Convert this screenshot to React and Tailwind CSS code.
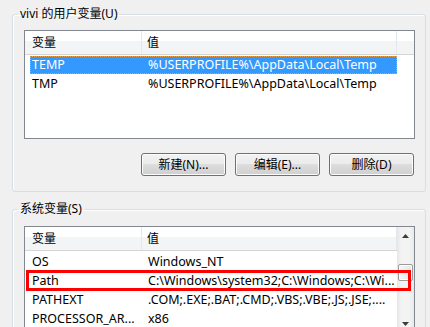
import React from "react";

function Header({ filler }) {
  return (
    <div className="flex h-[24px] shrink-0 border-b border-[#d5d5d5] bg-[linear-gradient(to_bottom,#ffffff_0%,#ffffff_42%,#f3f4f6_42%,#f3f4f6_100%)]">
      <div className="w-[117px] shrink-0 pl-[7px] flex items-center border-r border-[#e3e8ee]">变量</div>
      <div className="w-[255px] shrink-0 pl-[5px] flex items-center border-r border-[#e3e8ee]">值</div>
      {filler && <div className="flex-1" />}
    </div>
  );
}

function Row({ name, value, selected }) {
  return (
    <div className="h-[19px] flex shrink-0 text-[12.5px]">
      <div
        className={
          selected
            ? "ml-[5px] mt-[1px] w-[367px] flex items-center bg-[#3399ff] text-white outline outline-1 outline-dotted outline-[#e8a04a] -outline-offset-1"
            : "ml-[5px] w-[367px] flex items-center"
        }
      >
        <div className="w-[112px] shrink-0 pl-[2px] whitespace-nowrap overflow-hidden">{name}</div>
        <div className="w-[255px] shrink-0 pl-[6px] whitespace-nowrap overflow-hidden">{value}</div>
      </div>
    </div>
  );
}

function Button({ children }) {
  return (
    <div className="w-[85px] h-[23px] flex items-center justify-center rounded-[3px] border border-[#707070] bg-[linear-gradient(to_bottom,#f2f2f2_0%,#ebebeb_50%,#dddddd_50%,#cfcfcf_100%)] shadow-[inset_0_0_0_1px_#fcfcfc]">
      {children}
    </div>
  );
}

function Arrow({ down }) {
  return (
    <svg width="7" height="4" viewBox="0 0 7 4" className={down ? "rotate-180" : ""}>
      <polygon points="0,4 3.5,0 7,4" fill="#3c3c3c" />
    </svg>
  );
}

export default function App() {
  return (
    <div className="relative w-[430px] h-[327px] overflow-hidden bg-[#f0f0f0] pt-[6px] text-[12px] leading-[16px] text-black font-['Noto_Sans','Noto_Sans_CJK_SC',sans-serif]">
      <fieldset className="ml-[12px] w-[414px] border border-[#d5dfe5] rounded-[3px] p-0 shadow-[inset_1px_1px_0_#ffffff]">
        <legend className="ml-[5px] px-[2px] leading-[16px]">vivi 的用户变量(U)</legend>
        <div className="pl-[11px] pr-[10px] pb-[15px]">
          <div className="mt-[8px] h-[109px] border border-[#828790] bg-white flex flex-col overflow-hidden">
            <Header filler />
            <Row name="TEMP" value="%USERPROFILE%\AppData\Local\Temp" selected />
            <Row name="TMP" value="%USERPROFILE%\AppData\Local\Temp" />
          </div>
          <div className="mt-[14px] flex justify-end gap-[9px] pr-[1px]">
            <Button>新建(N)...</Button>
            <Button>编辑(E)...</Button>
            <Button>删除(D)</Button>
          </div>
        </div>
      </fieldset>

      <fieldset className="mt-[9px] ml-[12px] w-[414px] border border-[#d5dfe5] rounded-[3px] p-0 shadow-[inset_1px_1px_0_#ffffff]">
        <legend className="ml-[5px] px-[2px] leading-[16px]">系统变量(S)</legend>
        <div className="pl-[11px] pr-[10px] pb-[15px]">
          <div className="mt-[9px] h-[107px] border border-[#828790] bg-white flex overflow-hidden">
            <div className="w-[372px] flex flex-col overflow-hidden">
              <Header />
              <div className="h-[1px] shrink-0" />
              <Row name="OS" value="Windows_NT" />
              <Row name="Path" value="C:\Windows\system32;C:\Windows;C:\Wi..." />
              <Row name="PATHEXT" value=".COM;.EXE;.BAT;.CMD;.VBS;.VBE;.JS;.JSE;...." />
              <Row name="PROCESSOR_AR..." value="x86" />
            </div>
            <div className="w-[17px] flex flex-col bg-[linear-gradient(to_right,#e6e6e6,#f3f3f3_25%,#f3f3f3_75%,#e9e9e9)]">
              <div className="h-[17px] flex items-center justify-center">
                <Arrow />
              </div>
              <div className="flex-1">
                <div className="mt-[20px] mx-[1px] h-[17px] rounded-[2px] border border-[#9b9b9b] bg-[linear-gradient(to_right,#f6f6f6,#e6e6e6)] shadow-[inset_0_0_0_1px_#ffffff]" />
              </div>
              <div className="h-[17px] flex items-center justify-center">
                <Arrow down />
              </div>
            </div>
          </div>
        </div>
      </fieldset>

      <div className="absolute left-[26px] top-[270px] w-[385px] h-[21px] border-[3px] border-[#ff0000]" />
    </div>
  );
}
